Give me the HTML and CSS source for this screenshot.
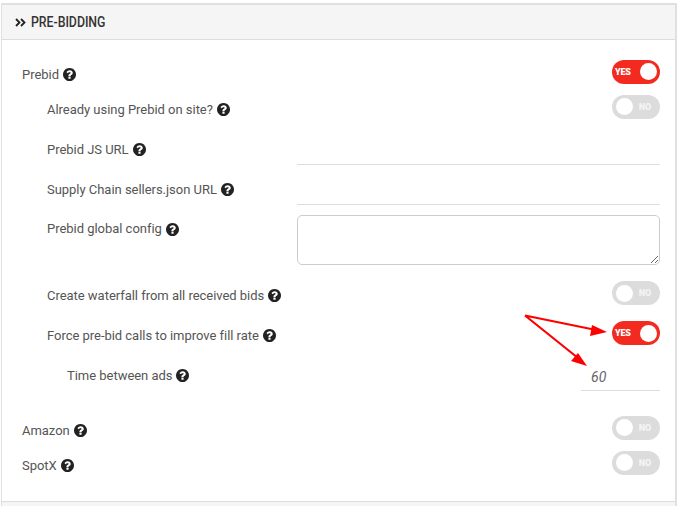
FILE: index.html
```html
<!DOCTYPE html>
<html lang="en">
<head>
	<meta charset="UTF-8">
	<title>Pre-bidding</title>
	<link rel="stylesheet" href="styles.css">
</head>
<body>
	<svg class="defs" width="0" height="0">
		<symbol id="help" viewBox="128 128 1536 1536">
			<path d="M1024 1376v-192q0-14-9-23t-23-9h-192q-14 0-23 9t-9 23v192q0 14 9 23t23 9h192q14 0 23-9t9-23zm256-672q0-88-55.5-163t-138.5-116-170-41q-243 0-371 213-15 24 8 42l132 100q7 6 19 6 16 0 25-12 53-68 86-92 34-24 86-24 48 0 85.5 26t37.5 59q0 38-20 61t-68 45q-63 28-115.5 86.5t-52.5 125.5v36q0 14 9 23t23 9h192q14 0 23-9t9-23q0-19 21.5-49.5t54.5-49.5q32-18 49-28.5t46-35 44.5-48 28-60.5 12.5-81zm384 192q0 209-103 385.5t-279.5 279.5-385.5 103-385.5-103-279.5-279.5-103-385.5 103-385.5 279.5-279.5 385.5-103 385.5 103 279.5 279.5 103 385.5z"/>
		</symbol>
	</svg>

	<div id="panel">
		<div class="panel-head">
			<svg class="chevrons" width="11" height="9" viewBox="0 0 11 9"><path d="M1 1l3.5 3.5L1 8M6 1l3.5 3.5L6 8"/></svg>
			<h2 class="panel-title">PRE-BIDDING</h2>
		</div>
		<div class="panel-body">
			<div class="row row-short">
				<label class="label">Prebid <svg class="help"><use href="#help"/></svg></label>
				<div class="switch on"><span class="switch-text">YES</span><span class="knob"></span></div>
			</div>
			<div class="row row-short indent row-gap">
				<label class="label">Already using Prebid on site? <svg class="help"><use href="#help"/></svg></label>
				<div class="switch"><span class="knob"></span><span class="switch-text">NO</span></div>
			</div>
			<div class="row indent">
				<label class="label">Prebid JS URL <svg class="help"><use href="#help"/></svg></label>
				<input class="text-input" type="text">
			</div>
			<div class="row indent">
				<label class="label">Supply Chain sellers.json URL <svg class="help"><use href="#help"/></svg></label>
				<input class="text-input" type="text">
			</div>
			<div class="row row-area indent">
				<label class="label">Prebid global config <svg class="help"><use href="#help"/></svg></label>
				<textarea class="area"></textarea>
			</div>
			<div class="row indent">
				<label class="label">Create waterfall from all received bids <svg class="help"><use href="#help"/></svg></label>
				<div class="switch"><span class="knob"></span><span class="switch-text">NO</span></div>
			</div>
			<div class="row indent">
				<label class="label">Force pre-bid calls to improve fill rate <svg class="help"><use href="#help"/></svg></label>
				<div class="switch on"><span class="switch-text">YES</span><span class="knob"></span></div>
			</div>
			<div class="row indent-2 row-last">
				<label class="label">Time between ads <svg class="help"><use href="#help"/></svg></label>
				<input class="text-input number" type="text" value="60">
			</div>
			<div class="row row-short">
				<label class="label">Amazon <svg class="help"><use href="#help"/></svg></label>
				<div class="switch"><span class="knob"></span><span class="switch-text">NO</span></div>
			</div>
			<div class="row row-short">
				<label class="label">SpotX <svg class="help"><use href="#help"/></svg></label>
				<div class="switch"><span class="knob"></span><span class="switch-text">NO</span></div>
			</div>
		</div>
		<div class="panel-foot"></div>

		<svg class="arrows" width="678" height="506" viewBox="0 0 678 506">
			<path class="arrow-line" d="M525 315.5L596 330M525 315.5L578 358"/>
			<path class="arrow-tip" d="M607 332L592 325L590 336Z"/>
			<path class="arrow-tip" d="M587 366L578 353L571 361Z"/>
		</svg>
	</div>
</body>
</html>
```

FILE: styles.css
```css
* {margin: 0; padding: 0; box-sizing: border-box;}
body {background: #fff; font-family: Roboto, "Liberation Sans", sans-serif; font-size: 13px; letter-spacing: -.03px; color: #555;}
.defs {position: absolute;}

#panel {margin: 3px 1px 0 1px; border: solid #e0e0e0; border-width: 2px 2px 0 1px; height: 503px; overflow: hidden;}
.panel-head {display: flex; align-items: center; gap: 5px; height: 35px; padding-left: 13px; background: #f5f5f5; border-bottom: 1px solid #ddd;}
.panel-title {font: 500 14px Roboto, sans-serif; color: #333; transform: scaleX(.88); transform-origin: left center;}
.chevrons {fill: none; stroke: #222; stroke-width: 1.8;}

.panel-body {padding: 17px 15px 18px 20px;}
.row {display: flex; justify-content: space-between; align-items: center; height: 40px;}
.row .label {margin-bottom: 1px;}
.row-short {height: 35px;}
.row-short .label {margin-bottom: 0;}
.row-gap {margin-bottom: 3px;}
.row-last {margin-bottom: 17px;}
.row-area {height: 66px; align-items: flex-start; padding-top: 5px;}
.row-area .label {margin: 4px 0 0;}
.indent {padding-left: 25px;}
.indent-2 {padding-left: 45px;}

.label {display: flex; align-items: center; gap: 4px; line-height: 20px;}
.help {width: 13px; height: 13px; fill: #222;}

.switch {display: flex; align-items: center; justify-content: space-between; width: 48px; height: 24px; margin-bottom: 6px; padding: 0 3px 0 3px; border-radius: 12px; background: #dcdcdc;}
.switch .knob {width: 17px; height: 17px; border-radius: 50%; background: #fff;}
.switch-text {font-size: 9px; font-weight: 900; color: #f4f4f4; letter-spacing: -.2px;}
.switch:not(.on) {padding: 0 9px 0 4px;}
.switch.on {background: #f32a1f;}
.switch.on .switch-text {color: #fff;}

.text-input {width: 363px; height: 30px; border: 0; border-bottom: 1px solid #ddd; outline: none; background: none; font: inherit;}
.number {width: 79px; padding: 2px 0 0 10px; font-size: 14px; font-style: italic; color: #666;}
.area {display: block; width: 363px; height: 50px; border: 1px solid #ccc; border-radius: 5px; outline: none; resize: vertical;}

.panel-foot {height: 6px; background: #f5f5f5; border-top: 1px solid #ddd;}

/* red marks drawn over the form */
.arrows {position: absolute; left: 0; top: 0; pointer-events: none;}
.arrow-line {fill: none; stroke: #f00; stroke-width: 2.2;}
.arrow-tip {fill: #f00;}
```
